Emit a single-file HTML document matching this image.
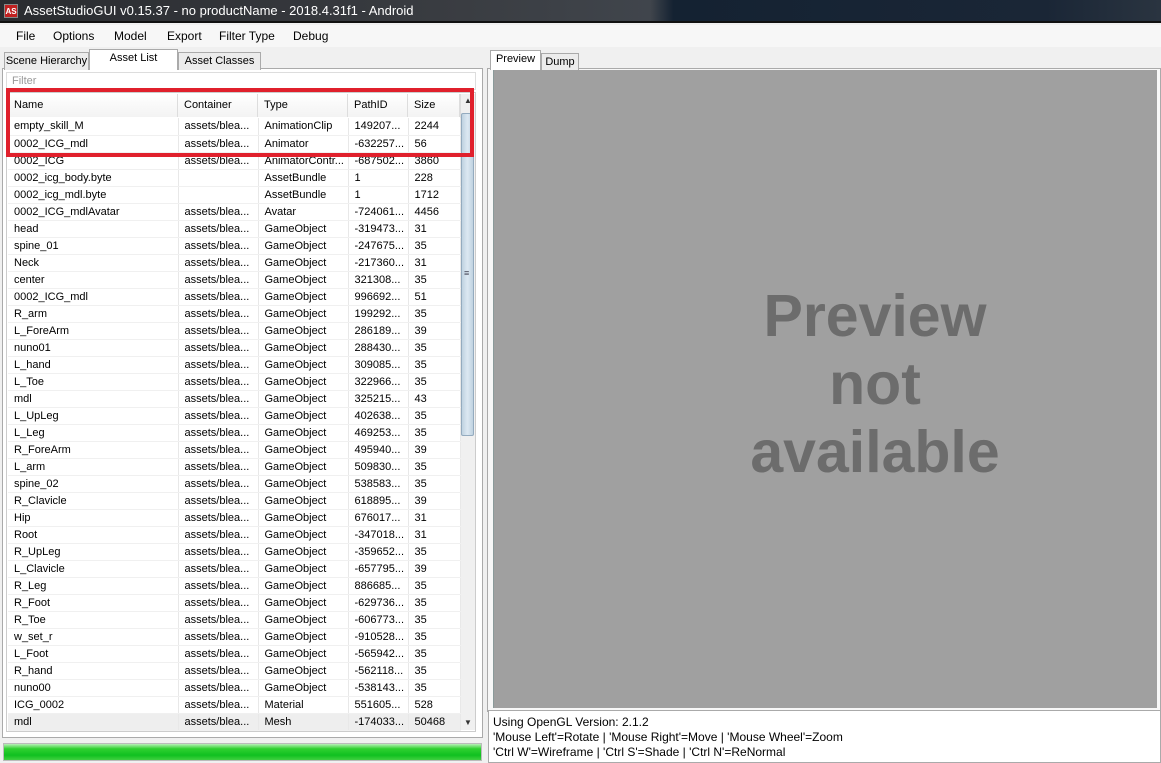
<!DOCTYPE html>
<html><head><meta charset="utf-8"><style>
*{margin:0;padding:0;box-sizing:border-box}
body{width:1161px;height:763px;overflow:hidden;background:#f0f0f0;font-family:"Liberation Sans",sans-serif;font-size:11px;color:#000;position:relative}
.abs{position:absolute}
#title{left:0;top:0;width:1161px;height:23px;background:linear-gradient(90deg,#2a2c30 0%,#3a3d42 40%,#40454c 56%,#142232 58%,#1a2636 90%,#2a3440 100%);border-bottom:2px solid #111}
#title .t{left:24px;top:3px;color:#fff;font-size:13px;white-space:nowrap}
#title .ic{left:4px;top:4px;width:14px;height:14px;background:#c02020;color:#fff;font-size:8px;font-weight:bold;line-height:14px;text-align:center;border:1px solid #888}
#menu{left:0;top:25px;width:1161px;height:22px;background:#f7f7f7}
#menu span{position:absolute;top:4px;font-size:12px}
.tab{position:absolute;background:#ececec;border:1px solid #aaa;border-bottom:none;font-size:11px;text-align:center;line-height:16px}
table{border-collapse:collapse;position:absolute;left:8px;top:118px;width:452px;table-layout:fixed}
td{height:17px;padding:0 0 0 6px;border-right:1px solid #e8e8e8;border-bottom:1px solid #f0f0f0;white-space:nowrap;overflow:hidden;font-size:11px;background:#fff}
.hd{position:absolute;top:94px;height:23px;line-height:23px;padding-left:6px;border-right:1px solid #ddd;background:linear-gradient(#fff,#f3f3f3);font-size:11px}
</style></head><body>
<div id="title" class="abs"><div class="ic abs">AS</div><div class="t abs">AssetStudioGUI v0.15.37 - no productName - 2018.4.31f1 - Android</div></div>
<div id="menu" class="abs"><span style="left:16px">File</span><span style="left:53px">Options</span><span style="left:114px">Model</span><span style="left:167px">Export</span><span style="left:219px">Filter Type</span><span style="left:293px">Debug</span></div>

<div class="abs" style="left:2px;top:68px;width:481px;height:670px;border:1px solid #aaa;background:#fff"></div>
<div class="tab" style="left:4px;top:52px;width:85px;height:18px">Scene Hierarchy</div>
<div class="tab" style="left:89px;top:49px;width:89px;height:21px;background:#fff;z-index:2">Asset List</div>
<div class="tab" style="left:178px;top:52px;width:83px;height:18px">Asset Classes</div>
<div class="abs" style="left:6px;top:72px;width:470px;height:18px;border:1px solid #ddd;color:#999;padding-left:5px;line-height:17px">Filter</div>
<div class="abs" style="left:6px;top:92px;width:470px;height:640px;border:1px solid #ccc;background:#fff"></div>
<div class="hd" style="left:8px;width:170px">Name</div>
<div class="hd" style="left:178px;width:80px">Container</div>
<div class="hd" style="left:258px;width:90px">Type</div>
<div class="hd" style="left:348px;width:60px">PathID</div>
<div class="hd" style="left:408px;width:52px">Size</div>
<div class="abs" style="left:460px;top:94px;width:15px;height:636px;background:#f0f0f0;border-left:1px solid #ddd"></div>
<div class="abs" style="left:461px;top:113px;width:13px;height:323px;background:linear-gradient(90deg,#bfd2e0,#dce8f2,#bfd2e0);border:1px solid #94abbf;border-radius:2px"></div>
<div class="abs" style="left:464px;top:268px;font-size:9px;color:#445">≡</div>
<div class="abs" style="left:464px;top:96px;font-size:8px;color:#333">▲</div>
<div class="abs" style="left:464px;top:718px;font-size:8px;color:#333">▼</div>
<table>
<colgroup><col style="width:170px"><col style="width:80px"><col style="width:90px"><col style="width:60px"><col style="width:52px"></colgroup>
<tr><td>empty_skill_M</td><td>assets/blea...</td><td>AnimationClip</td><td>149207...</td><td>2244</td></tr>
<tr><td>0002_ICG_mdl</td><td>assets/blea...</td><td>Animator</td><td>-632257...</td><td>56</td></tr>
<tr><td>0002_ICG</td><td>assets/blea...</td><td>AnimatorContr...</td><td>-687502...</td><td>3860</td></tr>
<tr><td>0002_icg_body.byte</td><td></td><td>AssetBundle</td><td>1</td><td>228</td></tr>
<tr><td>0002_icg_mdl.byte</td><td></td><td>AssetBundle</td><td>1</td><td>1712</td></tr>
<tr><td>0002_ICG_mdlAvatar</td><td>assets/blea...</td><td>Avatar</td><td>-724061...</td><td>4456</td></tr>
<tr><td>head</td><td>assets/blea...</td><td>GameObject</td><td>-319473...</td><td>31</td></tr>
<tr><td>spine_01</td><td>assets/blea...</td><td>GameObject</td><td>-247675...</td><td>35</td></tr>
<tr><td>Neck</td><td>assets/blea...</td><td>GameObject</td><td>-217360...</td><td>31</td></tr>
<tr><td>center</td><td>assets/blea...</td><td>GameObject</td><td>321308...</td><td>35</td></tr>
<tr><td>0002_ICG_mdl</td><td>assets/blea...</td><td>GameObject</td><td>996692...</td><td>51</td></tr>
<tr><td>R_arm</td><td>assets/blea...</td><td>GameObject</td><td>199292...</td><td>35</td></tr>
<tr><td>L_ForeArm</td><td>assets/blea...</td><td>GameObject</td><td>286189...</td><td>39</td></tr>
<tr><td>nuno01</td><td>assets/blea...</td><td>GameObject</td><td>288430...</td><td>35</td></tr>
<tr><td>L_hand</td><td>assets/blea...</td><td>GameObject</td><td>309085...</td><td>35</td></tr>
<tr><td>L_Toe</td><td>assets/blea...</td><td>GameObject</td><td>322966...</td><td>35</td></tr>
<tr><td>mdl</td><td>assets/blea...</td><td>GameObject</td><td>325215...</td><td>43</td></tr>
<tr><td>L_UpLeg</td><td>assets/blea...</td><td>GameObject</td><td>402638...</td><td>35</td></tr>
<tr><td>L_Leg</td><td>assets/blea...</td><td>GameObject</td><td>469253...</td><td>35</td></tr>
<tr><td>R_ForeArm</td><td>assets/blea...</td><td>GameObject</td><td>495940...</td><td>39</td></tr>
<tr><td>L_arm</td><td>assets/blea...</td><td>GameObject</td><td>509830...</td><td>35</td></tr>
<tr><td>spine_02</td><td>assets/blea...</td><td>GameObject</td><td>538583...</td><td>35</td></tr>
<tr><td>R_Clavicle</td><td>assets/blea...</td><td>GameObject</td><td>618895...</td><td>39</td></tr>
<tr><td>Hip</td><td>assets/blea...</td><td>GameObject</td><td>676017...</td><td>31</td></tr>
<tr><td>Root</td><td>assets/blea...</td><td>GameObject</td><td>-347018...</td><td>31</td></tr>
<tr><td>R_UpLeg</td><td>assets/blea...</td><td>GameObject</td><td>-359652...</td><td>35</td></tr>
<tr><td>L_Clavicle</td><td>assets/blea...</td><td>GameObject</td><td>-657795...</td><td>39</td></tr>
<tr><td>R_Leg</td><td>assets/blea...</td><td>GameObject</td><td>886685...</td><td>35</td></tr>
<tr><td>R_Foot</td><td>assets/blea...</td><td>GameObject</td><td>-629736...</td><td>35</td></tr>
<tr><td>R_Toe</td><td>assets/blea...</td><td>GameObject</td><td>-606773...</td><td>35</td></tr>
<tr><td>w_set_r</td><td>assets/blea...</td><td>GameObject</td><td>-910528...</td><td>35</td></tr>
<tr><td>L_Foot</td><td>assets/blea...</td><td>GameObject</td><td>-565942...</td><td>35</td></tr>
<tr><td>R_hand</td><td>assets/blea...</td><td>GameObject</td><td>-562118...</td><td>35</td></tr>
<tr><td>nuno00</td><td>assets/blea...</td><td>GameObject</td><td>-538143...</td><td>35</td></tr>
<tr><td>ICG_0002</td><td>assets/blea...</td><td>Material</td><td>551605...</td><td>528</td></tr>
<tr><td style="background:#eee">mdl</td><td style="background:#eee">assets/blea...</td><td style="background:#eee">Mesh</td><td style="background:#eee">-174033...</td><td style="background:#eee">50468</td></tr>
</table>
<div class="abs" style="left:6px;top:88px;width:468px;height:69px;border:4px solid #e0202c;z-index:5"></div>
<div class="abs" style="left:3px;top:743px;width:479px;height:18px;border:1px solid #bbb;background:linear-gradient(#b8f0b8 0%,#30d030 30%,#10c020 70%,#40d040 100%)"></div>

<div class="abs" style="left:487px;top:68px;width:674px;height:644px;border:1px solid #aaa;background:#f7f7f7"></div>
<div class="tab" style="left:490px;top:50px;width:51px;height:20px;background:#fff;z-index:2">Preview</div>
<div class="tab" style="left:541px;top:53px;width:38px;height:17px">Dump</div>
<div class="abs" style="left:493px;top:70px;width:664px;height:638px;background:#a0a0a0;border-left:1px solid #8a9a9a"></div>
<div class="abs" style="left:575px;top:282px;width:600px;text-align:center;font-weight:bold;font-size:59px;line-height:68px;color:#6c6c6c">Preview<br>not<br>available</div>
<div class="abs" style="left:488px;top:710px;width:673px;height:53px;background:#fff;border:1px solid #aaa"></div>
<div class="abs" style="left:493px;top:715px;font-family:'Liberation Sans',sans-serif;font-size:12px;line-height:15px;white-space:nowrap">Using OpenGL Version: 2.1.2<br>'Mouse Left'=Rotate | 'Mouse Right'=Move | 'Mouse Wheel'=Zoom<br>'Ctrl W'=Wireframe | 'Ctrl S'=Shade | 'Ctrl N'=ReNormal</div>
</body></html>
